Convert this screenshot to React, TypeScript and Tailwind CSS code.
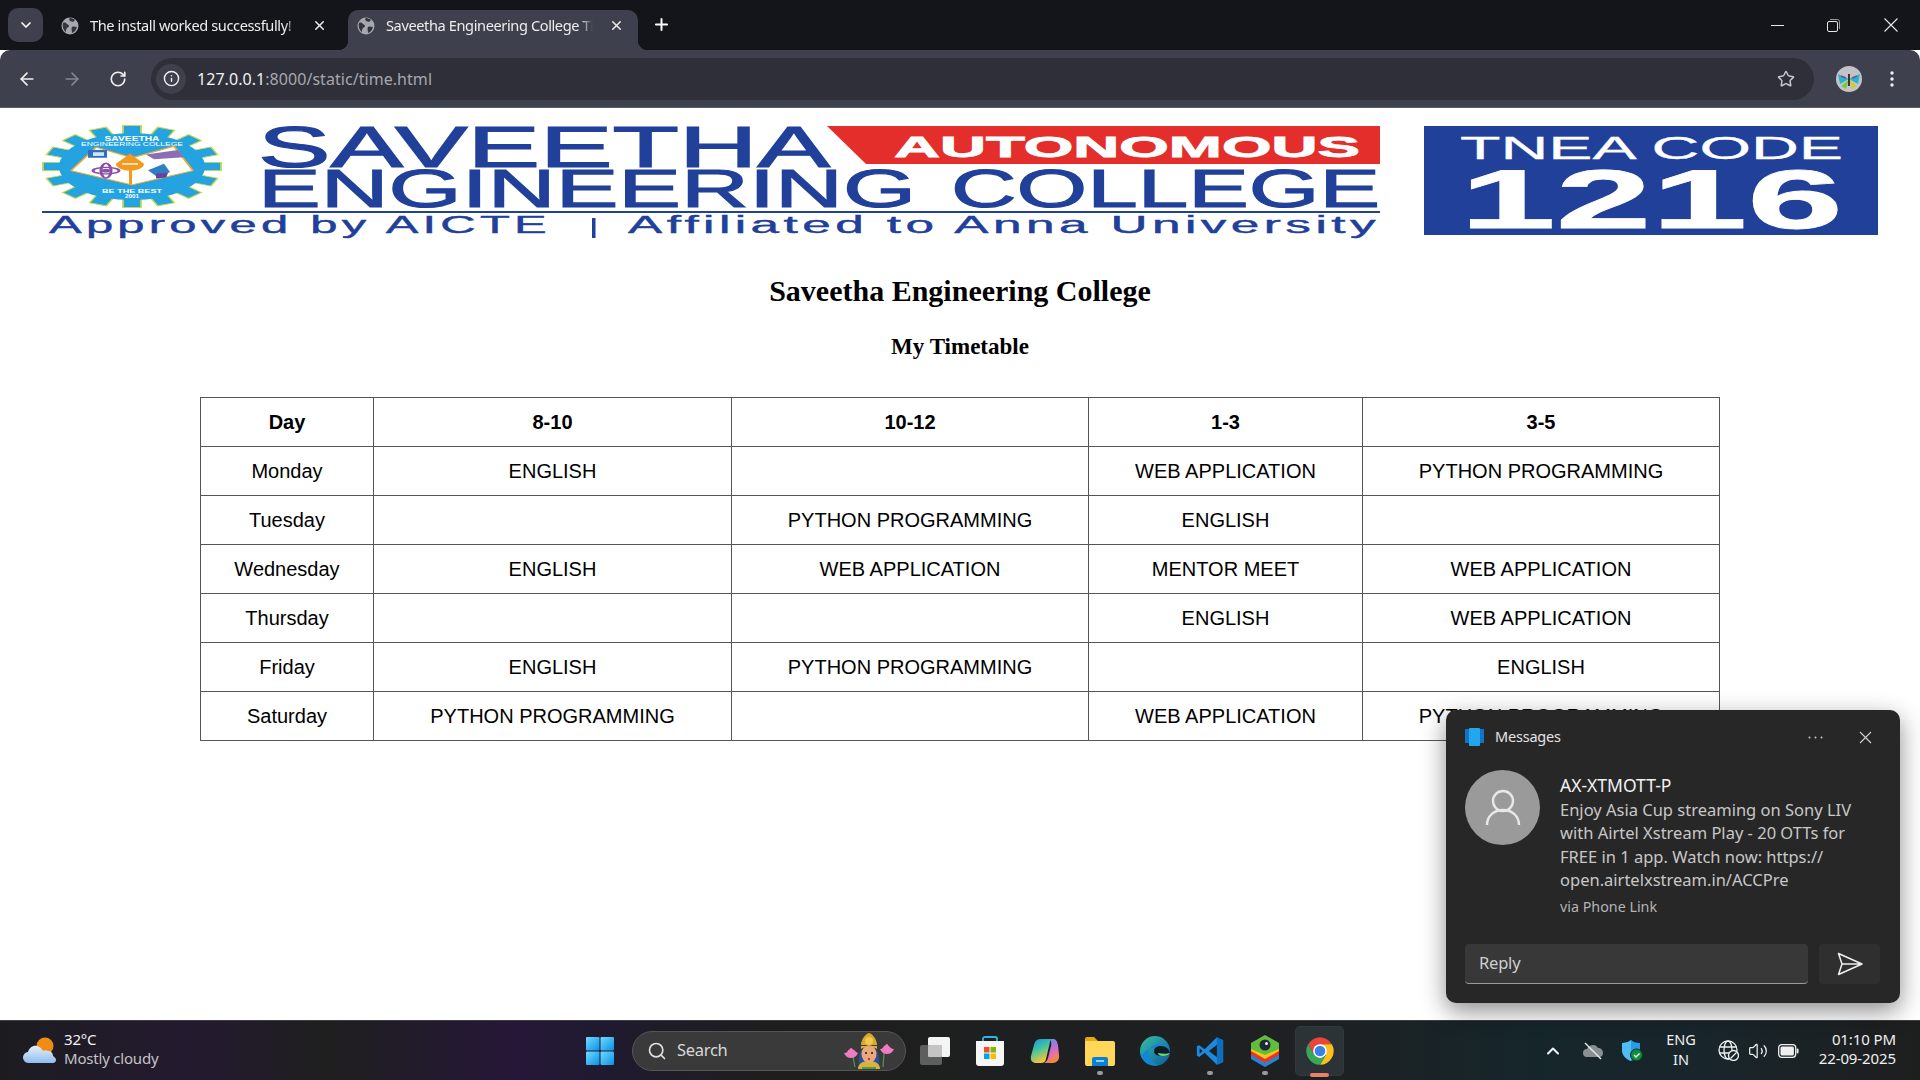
import React from "react";
import { ArrowLeft, ArrowRight, RotateCw, Info, Star, ChevronDown, X, Plus, Search, Volume2, ChevronUp } from "lucide-react";

const rows = [
  ["Monday", "ENGLISH", "", "WEB APPLICATION", "PYTHON PROGRAMMING"],
  ["Tuesday", "", "PYTHON PROGRAMMING", "ENGLISH", ""],
  ["Wednesday", "ENGLISH", "WEB APPLICATION", "MENTOR MEET", "WEB APPLICATION"],
  ["Thursday", "", "", "ENGLISH", "WEB APPLICATION"],
  ["Friday", "ENGLISH", "PYTHON PROGRAMMING", "", "ENGLISH"],
  ["Saturday", "PYTHON PROGRAMMING", "", "WEB APPLICATION", "PYTHON PROGRAMMING"],
];

function Favicon() {
  return (
    <svg width="18" height="18" viewBox="0 0 18 18" className="shrink-0">
      <circle cx="9" cy="9" r="8.500" fill="#a6a8ae" />
      <path d="M2 6c2-1 3 0 4 1s2 1 2 2-1 1-2 2-1 2-1 4C3 14 1 10 2 6zM9 1c2 0 4 1 5 2l-2 2-3-1-1-2zM11 10c2-1 3 0 5 0-1 3-2 5-5 6 0-2-1-4 0-6z" fill="#33353f" />
    </svg>
  );
}

function Banner() {
  const teeth = Array.from({ length: 16 }, (_, i) => (i * 360) / 16);
  const blue = "#21409a";
  return (
    <svg width="1342" height="115" viewBox="0 0 1342 115" className="shrink-0">
      <g transform="translate(92 42.500) scale(1 0.46)">
        {teeth.map((a) => (
          <rect key={a} x="-9" y="-89" width="18" height="22" fill="#25a3e0" stroke="#c5d94a" strokeWidth="1.800" transform={`rotate(${a})`} />
        ))}
        <circle r="73" fill="#25a3e0" />
        <path d="M-61 9 L-36 -42 L0 -19 L42 -44 L61 9 L0 40 Z" fill="#ffffff" stroke="#f0a92b" strokeWidth="2" strokeLinejoin="round" />
        <rect x="-44" y="-36" width="19" height="17" fill="#2f6fc0" />
        <rect x="-39" y="-31" width="11" height="8" fill="#cfe6f7" />
        <ellipse cx="-26" cy="9" rx="13" ry="7" fill="none" stroke="#8a4fa8" strokeWidth="3" />
        <ellipse cx="-26" cy="9" rx="5" ry="16" fill="none" stroke="#8a4fa8" strokeWidth="3" />
        <circle cx="-26" cy="9" r="4" fill="#8a4fa8" />
        <path d="M14 -26 L46 -36 L52 -20 L22 -16 Z" fill="#8b6fb5" />
        <path d="M16 8 L32 -6 L38 12 L26 24 Z" fill="#2f7fc0" />
        <path d="M24 16 L36 14 L34 24 L24 26 Z" fill="#6a3d9e" />
        <path d="M-2 -28 L12 -6 A13 14 0 1 1 -16 -6 Z" fill="#f39a1e" />
        <rect x="-10" y="-7" width="16" height="3" fill="#fff" />
        <rect x="-3" y="8" width="3" height="31" fill="#f39a1e" />
        <text x="0" y="-56" textAnchor="middle" fontFamily="Liberation Sans" fontWeight="700" fontSize="15" fill="#fff" textLength="55" lengthAdjust="spacingAndGlyphs">SAVEETHA</text>
        <text x="0" y="-45" textAnchor="middle" fontFamily="Liberation Sans" fontSize="10" fill="#fff" textLength="102" lengthAdjust="spacingAndGlyphs">ENGINEERING COLLEGE</text>
        <text x="0" y="57" textAnchor="middle" fontFamily="Liberation Sans" fontWeight="700" fontSize="11" fill="#fff" textLength="60" lengthAdjust="spacingAndGlyphs">BE THE BEST</text>
        <text x="0" y="69" textAnchor="middle" fontFamily="Liberation Sans" fontWeight="700" fontSize="10" fill="#fff" textLength="14" lengthAdjust="spacingAndGlyphs">2001</text>
      </g>
      <text x="218" y="43" fontFamily="Liberation Sans" fontSize="57" fill={blue} stroke={blue} strokeWidth="1.200" textLength="572" lengthAdjust="spacingAndGlyphs">SAVEETHA</text>
      <path d="M787 2 H1340 V40 H826 Z" fill="#e42e2c" />
      <text x="854" y="33" fontFamily="Liberation Sans" fontWeight="700" fontSize="29" fill="#fff" stroke="#fff" strokeWidth="0.800" textLength="466" lengthAdjust="spacingAndGlyphs">AUTONOMOUS</text>
      <text x="218" y="83" fontFamily="Liberation Sans" fontSize="54" fill={blue} stroke={blue} strokeWidth="1.100" textLength="658" lengthAdjust="spacingAndGlyphs">ENGINEERING</text>
      <text x="911" y="83" fontFamily="Liberation Sans" fontSize="54" fill={blue} stroke={blue} strokeWidth="1.100" textLength="429" lengthAdjust="spacingAndGlyphs">COLLEGE</text>
      <rect x="2" y="87" width="1338" height="2" fill={blue} />
      <text x="9" y="109" fontFamily="Liberation Sans" fontSize="23" letterSpacing="2" fill={blue} stroke={blue} strokeWidth="0.400" textLength="502" lengthAdjust="spacingAndGlyphs">Approved by AICTE</text>
      <rect x="552" y="94" width="3.500" height="20" fill={blue} />
      <text x="588" y="109" fontFamily="Liberation Sans" fontSize="23" letterSpacing="2" fill={blue} stroke={blue} strokeWidth="0.400" textLength="752" lengthAdjust="spacingAndGlyphs">Affiliated to Anna University</text>
    </svg>
  );
}

function Tnea() {
  return (
    <svg width="454" height="109" viewBox="0 0 454 109" className="shrink-0">
      <rect width="454" height="109" fill="#21409a" />
      <text x="36" y="33" fontFamily="Liberation Sans" fontSize="32" fill="#fff" stroke="#fff" strokeWidth="0.300" textLength="383" lengthAdjust="spacingAndGlyphs">TNEA CODE</text>
      <text x="36" y="102" fontFamily="Liberation Sans" fontSize="84" fontWeight="700" fill="#fff" stroke="#fff" strokeWidth="0.800" textLength="383" lengthAdjust="spacingAndGlyphs">1216</text>
    </svg>
  );
}

function Butterfly() {
  return (
    <svg width="26" height="26" viewBox="0 0 26 26">
      <circle cx="13" cy="13" r="13" fill="#c4c4c8" />
      <path d="M13 13 L2 8 L4 18 Z" fill="#22b8c8" />
      <path d="M13 13 L24 8 L22 18 Z" fill="#22b8c8" />
      <path d="M13 14 L5 20 L10 23 Z" fill="#7ac943" />
      <path d="M13 14 L21 20 L16 23 Z" fill="#d8c83a" />
      <path d="M12 8h2v12h-2z" fill="#4a3226" />
      <path d="M5 10l5 2M21 10l-5 2" stroke="#8e3fa8" strokeWidth="1.500" />
    </svg>
  );
}

function WinLogo() {
  return (
    <svg width="28" height="28" viewBox="0 0 28 28" className="shrink-0">
      <defs>
        <linearGradient id="wl" x1="0" y1="0" x2="1" y2="1">
          <stop offset="0" stopColor="#6fdcff" />
          <stop offset="1" stopColor="#0a8fe6" />
        </linearGradient>
      </defs>
      <rect x="0" y="0" width="13.500" height="13.500" rx="1" fill="url(#wl)" />
      <rect x="14.500" y="0" width="13.500" height="13.500" rx="1" fill="url(#wl)" />
      <rect x="0" y="14.500" width="13.500" height="13.500" rx="1" fill="url(#wl)" />
      <rect x="14.500" y="14.500" width="13.500" height="13.500" rx="1" fill="url(#wl)" />
    </svg>
  );
}

function TaskView() {
  return (
    <svg width="30" height="28" viewBox="0 0 30 28">
      <rect x="8" y="0" width="22" height="20" rx="2" fill="#f4f4f4" />
      <rect x="0" y="8" width="22" height="20" rx="2" fill="#5e5e5e" />
      <rect x="8" y="8" width="14" height="12" rx="1" fill="#c4c4c4" />
    </svg>
  );
}

function Store() {
  return (
    <svg width="30" height="30" viewBox="0 0 30 30">
      <path d="M8 7V2.500C8 1.500 9 1 10 1h10c1 0 2 .5 2 1.500V7" fill="none" stroke="#29b6e8" strokeWidth="1.800" />
      <path d="M1 5h28v22a3 3 0 0 1-3 3H4a3 3 0 0 1-3-3z" fill="#f6f6f6" />
      <rect x="9" y="11" width="5.500" height="5.500" fill="#f25022" />
      <rect x="15.500" y="11" width="5.500" height="5.500" fill="#7fba00" />
      <rect x="9" y="17.500" width="5.500" height="5.500" fill="#00a4ef" />
      <rect x="15.500" y="17.500" width="5.500" height="5.500" fill="#ffb900" />
    </svg>
  );
}

function Copilot() {
  return (
    <svg width="30" height="26" viewBox="0 0 30 26">
      <defs>
        <linearGradient id="cpa" x1="0" y1="0" x2="0.400" y2="1">
          <stop offset="0" stopColor="#2088e8" />
          <stop offset="0.500" stopColor="#3fc7a0" />
          <stop offset="1" stopColor="#f5c33b" />
        </linearGradient>
        <linearGradient id="cpb" x1="0" y1="0" x2="0.400" y2="1">
          <stop offset="0" stopColor="#30b0e8" />
          <stop offset="0.450" stopColor="#b070e0" />
          <stop offset="0.800" stopColor="#f0709a" />
          <stop offset="1" stopColor="#f08a3c" />
        </linearGradient>
      </defs>
      <path d="M11 1h8c1 0 1.500 1 1 3L16 21c-.6 2.400-2 4-5 4H6c-3 0-6-2-5-7L4 7c1-4 3-6 7-6z" fill="url(#cpa)" />
      <path d="M18 1h5c3 0 4 2 5 6l1 10c1 5-3 8-6 8h-9c2-1 3-2 4-5l3-12c.7-3 .5-6-3-7z" fill="url(#cpb)" />
    </svg>
  );
}

function Folder() {
  return (
    <svg width="30" height="30" viewBox="0 0 30 30">
      <path d="M0 3a2 2 0 0 1 2-2h7l4 4h-13z" fill="#e8a80c" />
      <path d="M0 5h28a2 2 0 0 1 2 2v21a2 2 0 0 1-2 2H2a2 2 0 0 1-2-2z" fill="#ffd75a" />
      <path d="M7 30v-7a2 2 0 0 1 2-2h12a2 2 0 0 1 2 2v7z" fill="#0f7fd0" />
      <rect x="11" y="24" width="8" height="2" fill="#8fd0f5" />
    </svg>
  );
}

function Edge() {
  return (
    <svg width="30" height="30" viewBox="0 0 30 30">
      <defs>
        <linearGradient id="eda" x1="0" y1="0" x2="1" y2="1">
          <stop offset="0" stopColor="#35c1a0" />
          <stop offset="1" stopColor="#0c59a4" />
        </linearGradient>
      </defs>
      <circle cx="15" cy="15" r="15" fill="url(#eda)" />
      <path d="M30 17c0-5-5-9-11-9-7 0-12 6-10 13 1 4 5 7 10 8-8 2-17-3-19-12 3 5 3-4 14-5 9-1 16 1 16 5z" fill="#1186d8" />
      <path d="M14 15c0-3 3-5 7-5 5 0 8 3 9 7-1 2-4 3-7 3-5 0-9-1-9-5z" fill="#141c22" />
      <path d="M30 17c-1 2-4 3-7 3-3 0-5-1-5-3 4 1 9 1 12 0z" fill="#5fe07a" />
    </svg>
  );
}

function VSCode() {
  return (
    <svg width="30" height="30" viewBox="0 0 24 24">
      <path fillRule="evenodd" d="M17.500 1 7.700 10.600 3.300 7.300 1.500 8.200v7.600l1.800.9 4.400-3.300L17.500 23 22.500 20.700V3.300zM17.600 7 11.200 12l6.400 5zM3.700 9.800 6 12l-2.300 2.200z" fill="#1a8ae0" />
      <path d="M17.500 1 22.500 3.300V20.700L17.500 23z" fill="#0f6fbf" />
    </svg>
  );
}

function BlueStacks() {
  return (
    <svg width="30" height="32" viewBox="0 0 30 32">
      <path d="M15 14 29 20v4L15 32 1 24v-4z" fill="#1e88d8" />
      <path d="M15 10 29 16v4L15 28 1 20v-4z" fill="#e8352b" />
      <path d="M15 6 29 12v4L15 24 1 16v-4z" fill="#f5c518" />
      <path d="M15 0 29 8v6L15 20 1 14V8z" fill="#62bd3c" />
      <circle cx="15" cy="10" r="5.500" fill="#1f2a33" />
      <circle cx="16.500" cy="8.500" r="1.500" fill="#eef" />
    </svg>
  );
}

function Chrome() {
  return (
    <svg width="30" height="30" viewBox="0 0 48 48">
      <path d="M5 13 A22 22 0 0 1 43 13 L24 13 L14.500 30 Z" fill="#e8453c" />
      <path d="M43 13 A22 22 0 0 1 24 46 L33.500 30 L24 13 Z" fill="#f9c01e" />
      <path d="M24 46 A22 22 0 0 1 5 13 L14.500 30 L33.500 30 Z" fill="#3aa757" />
      <circle cx="24" cy="24" r="11" fill="#fff" />
      <circle cx="24" cy="24" r="8.500" fill="#3a80ec" />
    </svg>
  );
}

function Deity() {
  return (
    <svg width="51" height="36" viewBox="0 0 51 36">
      <path d="M10 24 12 34M41 20 40 34" stroke="#4f9a45" strokeWidth="1.200" />
      <path d="M1 20c3 0 4-2 4-3 2 0 2-2 3-2 1 0 2 2 3 2 1 0 1 2 4 3-1 3-4 5-7 5s-6-2-7-5z" fill="#ef7cc0" />
      <path d="M37 16c3 0 3-2 4-3 1 0 2-2 3-2 1 0 1 2 2 2 1 1 2 3 5 3-1 3-4 5-7 5s-6-2-7-5z" fill="#ef7cc0" />
      <path d="M18 12c0-5 4-11 8-12 4 1 8 7 8 12z" fill="#d9a92e" />
      <circle cx="26" cy="8" r="4" fill="#f0c84a" />
      <path d="M16 34c-1-10 0-20 10-20s11 10 10 20z" fill="#2b4f9a" />
      <path d="M15 36c0-5 4-8 11-8s11 3 11 8z" fill="#d8b53a" />
      <ellipse cx="26" cy="21" rx="7.500" ry="9" fill="#e9a97c" />
      <path d="M18 16c4-3 12-3 16 0v-3H18z" fill="#e0b43a" />
      <circle cx="23" cy="20" r="1.100" fill="#222" />
      <circle cx="29" cy="20" r="1.100" fill="#222" />
      <circle cx="26" cy="26" r="1.200" fill="#c23b3b" />
      <path d="M19 34h14v2H19z" fill="#4f9a45" />
    </svg>
  );
}

function Weather() {
  return (
    <svg width="34" height="28" viewBox="0 0 34 28" className="shrink-0">
      <defs>
        <linearGradient id="wc" x1="0" y1="0" x2="0" y2="1">
          <stop offset="0" stopColor="#e6f0fb" />
          <stop offset="1" stopColor="#8fbdec" />
        </linearGradient>
      </defs>
      <circle cx="22" cy="9" r="8.500" fill="#f08c14" />
      <path d="M6 26a5.500 5.500 0 0 1-1-11c1-4 5-7 9-6 3 .5 5 3 6 5 1-1 3-1 5 0 3 0 5 2 5 5 2 1 3 3 3 4s-1 3-3 3z" fill="url(#wc)" />
    </svg>
  );
}

function OneDrive() {
  return (
    <svg width="22" height="18" viewBox="0 0 22 18">
      <path d="M5 15a4 4 0 0 1 0-8c1-3 4-4 6-4s4 1 5 3c3 0 5 2 5 5s-2 4-4 4z" fill="#8a9092" />
      <path d="M3 1 19 17" stroke="#e8e8e8" strokeWidth="1.400" />
    </svg>
  );
}

function Shield() {
  return (
    <svg width="22" height="22" viewBox="0 0 22 22">
      <path d="M9 0c2 2 5 3 9 3v7c0 5-4 9-9 11-5-2-9-6-9-11V3c4 0 7-1 9-3z" fill="#2a9be8" />
      <path d="M9 0v21C4 19 0 15 0 10V3c4 0 7-1 9-3z" fill="#50bdf5" />
      <circle cx="14.500" cy="15" r="6" fill="#0f8f3a" stroke="#15262b" />
      <path d="M12 15l2 2 3.500-3.500" fill="none" stroke="#fff" strokeWidth="1.400" />
    </svg>
  );
}

function GlobeOff() {
  return (
    <svg width="21" height="21" viewBox="0 0 21 21" fill="none" stroke="#f0f0f0" strokeWidth="1.300">
      <circle cx="10" cy="10" r="9" />
      <ellipse cx="10" cy="10" rx="4" ry="9" />
      <path d="M1.500 7h17M1.500 13h17" />
      <circle cx="15.500" cy="15.500" r="5" fill="#15262b" />
      <path d="M12.500 18.500l6-6" />
    </svg>
  );
}

function Battery() {
  return (
    <svg width="21" height="14" viewBox="0 0 21 14">
      <rect x="0.700" y="0.700" width="17" height="12.600" rx="3" fill="none" stroke="#f0f0f0" strokeWidth="1.300" />
      <rect x="2.500" y="2.500" width="13.400" height="9" rx="1.500" fill="#f0f0f0" />
      <rect x="18.700" y="4.500" width="1.800" height="5" rx="0.900" fill="#f0f0f0" />
    </svg>
  );
}

function Slot({ children, dot, active }: { children: React.ReactNode; dot?: boolean; active?: boolean }) {
  return (
    <div className="relative flex h-[50px] w-[55px] shrink-0 items-center justify-center">
      {active && <div className="absolute inset-y-0 left-[3px] right-[3px] rounded-[5px] border border-[#2f3a3e] bg-[#2b3336]" />}
      <div className="relative flex">{children}</div>
      {dot && <div className="absolute bottom-[1px] h-[4px] w-[6px] rounded-full bg-[#9a9a9a]" />}
      {active && <div className="absolute bottom-[-1px] h-[4px] w-[19px] rounded-full bg-[#e9806a]" />}
    </div>
  );
}

function Tab({ title, active, w, pl, ml }: { title: string; active?: boolean; w: string; pl: string; ml: string }) {
  return (
    <div className={`relative flex h-[40px] items-center pb-[9px] ${pl} ${w} ${active ? "rounded-t-[10px] bg-[#3e404d]" : ""}`}>
      {active && <div className="absolute bottom-0 left-[-10px] h-[10px] w-[10px] bg-[radial-gradient(circle_at_0_0,transparent_10px,#3e404d_10.500px)]" />}
      {active && <div className="absolute bottom-0 right-[-10px] h-[10px] w-[10px] bg-[radial-gradient(circle_at_100%_0,transparent_10px,#3e404d_10.500px)]" />}
      <Favicon />
      <span className="ml-[11px] w-[207px] overflow-hidden whitespace-nowrap text-[14.600px] tracking-[-0.4px] text-[#eceded] [mask-image:linear-gradient(90deg,#000_195px,transparent_207px)]">
        {title}
      </span>
      <X size={15} strokeWidth={2.500} className={`${ml} text-[#e8e8e8]`} />
    </div>
  );
}

function Toast() {
  return (
    <div className="absolute left-[1446px] top-[710px] flex h-[293px] w-[454px] flex-col rounded-[10px] bg-[#272727] pl-[19px] pr-[20px] shadow-[0_8px_24px_rgba(0,0,0,0.45)]">
      <div className="flex h-[54px] shrink-0 items-center">
        <svg width="19" height="18" viewBox="0 0 19 18">
          <rect x="0" y="1" width="19" height="14" fill="#1473c4" />
          <rect x="4" y="0" width="11" height="18" rx="1" fill="#22a7ee" />
        </svg>
        <span className="ml-[11px] text-[14.500px] tracking-[-0.2px] text-[#e4e4e4]">Messages</span>
        <svg width="15" height="3" viewBox="0 0 15 3" className="ml-auto">
          <circle cx="1.500" cy="1.500" r="1" fill="#c8c8c8" />
          <circle cx="7.500" cy="1.500" r="1" fill="#c8c8c8" />
          <circle cx="13.500" cy="1.500" r="1" fill="#c8c8c8" />
        </svg>
        <svg width="13" height="13" viewBox="0 0 13 13" className="ml-[36px] mr-[8px]">
          <path d="M1 1l11 11M12 1 1 12" stroke="#d0d0d0" strokeWidth="1.100" />
        </svg>
      </div>
      <div className="flex h-[180px] shrink-0">
        <div className="mt-[6px] flex h-[75px] w-[75px] shrink-0 items-center justify-center rounded-full bg-[#9a9a9a]">
          <svg width="36" height="38" viewBox="0 0 36 38">
            <circle cx="18" cy="12" r="10" fill="none" stroke="#e8e8e8" strokeWidth="2.400" />
            <path d="M2 36c0-9 7-15 16-15s16 6 16 15" fill="none" stroke="#e8e8e8" strokeWidth="2.400" />
          </svg>
        </div>
        <div className="ml-[20px] flex flex-col">
          <div className="mt-[10px] text-[17.500px] leading-[22px] text-[#f2f2f2]">AX-XTMOTT-P</div>
          <div className="mt-[2px] whitespace-nowrap text-[16.500px] leading-[23.300px] text-[#c8c8c8]">
            <div>Enjoy Asia Cup streaming on Sony LIV</div>
            <div>with Airtel Xstream Play - 20 OTTs for</div>
            <div>FREE in 1 app. Watch now: https://</div>
            <div>open.airtelxstream.in/ACCPre</div>
          </div>
          <div className="mt-[6px] text-[14.300px] leading-[20px] text-[#b4b4b4]">via Phone Link</div>
        </div>
      </div>
      <div className="flex h-[40px] shrink-0 gap-[11px]">
        <div className="flex w-[343px] items-center rounded-[4px] border-b border-[#9a9a9a] bg-[#383838] pl-[14px] text-[16.500px] tracking-[-0.2px] text-[#cfcfcf]">Reply</div>
        <div className="flex w-[61px] items-center justify-center rounded-[4px] bg-[#2f2f2f]">
          <svg width="26" height="24" viewBox="0 0 26 24">
            <path d="M1.500 1.500 25 12 1.500 22.500 5 12zM5 12h20" fill="none" stroke="#f0f0f0" strokeWidth="1.500" strokeLinejoin="round" />
          </svg>
        </div>
      </div>
    </div>
  );
}

export default function App() {
  return (
    <div className="relative flex h-screen w-full flex-col overflow-hidden bg-white font-['Noto_Sans',sans-serif]">
      {/* tab strip */}
      <div className="flex h-[50px] shrink-0 items-end bg-[#14151a] pl-[8px]">
        <div className="mb-[8px] flex h-[34px] w-[35px] items-center justify-center rounded-[10px] bg-[#3e404d] text-white">
          <ChevronDown size={16} strokeWidth={2.500} />
        </div>
        <Tab title="The install worked successfully!" w="w-[295px]" pl="pl-[18px]" ml="ml-[15px]" />
        <div className="w-[10px]" />
        <Tab title="Saveetha Engineering College Timetable" active w="w-[290px]" pl="pl-[9px]" ml="ml-[16px]" />
        <Plus size={19} strokeWidth={2.500} className="mb-[16px] ml-[14px] text-white" />
        <div className="mb-[18px] ml-auto flex items-center text-[#e8e8e8]">
          <div className="h-px w-[13px] bg-[#e8e8e8]" />
          <svg width="13" height="13" viewBox="0 0 13 13" className="ml-[43px]">
            <rect x="0.500" y="2.500" width="10" height="10" rx="1.500" fill="none" stroke="#e8e8e8" />
            <path d="M3 .5h7.500a2 2 0 0 1 2 2V10" fill="none" stroke="#9a9a9a" />
          </svg>
          <svg width="14" height="14" viewBox="0 0 14 14" className="ml-[44px] mr-[22px]">
            <path d="M.5.5l13 13M13.500.5l-13 13" stroke="#e8e8e8" strokeWidth="1.100" />
          </svg>
        </div>
      </div>
      {/* toolbar */}
      <div className="flex h-[58px] shrink-0 items-center rounded-t-[10px] border-b border-[#5c5d66] bg-[#3e404d] pl-[17px] pr-[26px]">
        <ArrowLeft size={20} strokeWidth={2} className="text-[#f0f0f0]" />
        <ArrowRight size={20} strokeWidth={2} className="ml-[25px] text-[#85868e]" />
        <RotateCw size={18} strokeWidth={2.200} className="ml-[27px] text-[#f0f0f0]" />
        <div className="ml-[24px] flex h-[42px] flex-1 items-center rounded-full bg-[#2e2f39] pl-[5px] pr-[19px]">
          <div className="flex h-[30px] w-[30px] items-center justify-center rounded-full bg-[#3e404d]">
            <Info size={17} strokeWidth={2} className="text-[#f0f0f0]" />
          </div>
          <span className="ml-[11px] mt-[1px] text-[16px] tracking-[0.05px] text-[#f2f2f2]">
            127.0.0.1<span className="text-[#a6a7ad]">:8000/static/time.html</span>
          </span>
          <Star size={18} strokeWidth={2} className="ml-auto text-[#c8c8cc]" />
        </div>
        <div className="ml-[22px] flex">
          <Butterfly />
        </div>
        <svg width="4" height="16" viewBox="0 0 4 16" className="ml-[28px]">
          <circle cx="2" cy="2" r="1.700" fill="#f0f0f0" />
          <circle cx="2" cy="8" r="1.700" fill="#f0f0f0" />
          <circle cx="2" cy="14" r="1.700" fill="#f0f0f0" />
        </svg>
      </div>
      {/* page */}
      <main className="flex-1 font-['Liberation_Serif',serif] text-black">
        <div className="flex pl-[40px] pt-[16px]">
          <Banner />
          <div className="ml-[42px] mt-[2px]">
            <Tnea />
          </div>
        </div>
        <h1 className="mt-[34px] text-center text-[30px] font-bold leading-[35px]">Saveetha Engineering College</h1>
        <h2 className="mt-[25px] text-center text-[23px] font-bold leading-[27px]">My Timetable</h2>
        <table className="ml-[200px] mt-[37px] w-[1519px] table-fixed border-collapse font-['Liberation_Sans',Arial,sans-serif] text-[20px]">
          <colgroup>
            <col className="w-[173px]" />
            <col className="w-[358px]" />
            <col className="w-[357px]" />
            <col className="w-[274px]" />
            <col className="w-[357px]" />
          </colgroup>
          <thead>
            <tr className="h-[49px]">
              {["Day", "8-10", "10-12", "1-3", "3-5"].map((h) => (
                <th key={h} className="border border-[#555555] p-0 text-center font-bold">{h}</th>
              ))}
            </tr>
          </thead>
          <tbody>
            {rows.map((r) => (
              <tr key={r[0]} className="h-[49px]">
                {r.map((c, i) => (
                  <td key={i} className="border border-[#555555] p-0 text-center">{c}</td>
                ))}
              </tr>
            ))}
          </tbody>
        </table>
      </main>
      {/* taskbar */}
      <div className="flex h-[60px] shrink-0 items-center border-t border-[#3d3d42] bg-[linear-gradient(90deg,#1c1c20_0%,#241a30_10%,#1f1f1f_17%,#261738_27%,#1f1a30_31%,#1e1e1e_40%,#1e2022_68%,#15262b_80%,#19252a_90%,#1e1e1e_100%)]">
        <div className="flex w-[586px] shrink-0 items-center pl-[23px]">
          <Weather />
          <div className="mb-[3px] ml-[7px] flex flex-col text-[15px] leading-[19.500px] tracking-[-0.2px]">
            <span className="text-[#f4f4f4]">32°C</span>
            <span className="text-[#c4c4c4]">Mostly cloudy</span>
          </div>
        </div>
        <WinLogo />
        <div className="ml-[18px] flex h-[40px] w-[274px] shrink-0 items-center overflow-hidden rounded-full border border-[#555] bg-[#3a3a3a] pl-[14px]">
          <Search size={20} strokeWidth={2} className="text-[#e0e0e0]" />
          <span className="ml-[10px] text-[16.500px] tracking-[-0.3px] text-[#d8d8d8]">Search</span>
          <div className="ml-auto mr-[11px] flex">
            <Deity />
          </div>
        </div>
        <div className="ml-[1px] flex">
          <Slot><TaskView /></Slot>
          <Slot><Store /></Slot>
          <Slot><Copilot /></Slot>
          <Slot dot><Folder /></Slot>
          <Slot><Edge /></Slot>
          <Slot dot><VSCode /></Slot>
          <Slot dot><BlueStacks /></Slot>
          <Slot active><Chrome /></Slot>
        </div>
        <div className="ml-auto flex items-center text-[#f0f0f0]">
          <div className="flex w-[40px] justify-center"><ChevronUp size={20} strokeWidth={2.500} /></div>
          <div className="flex w-[40px] justify-center"><OneDrive /></div>
          <div className="flex w-[40px] justify-center"><Shield /></div>
          <div className="mb-[2px] flex w-[56px] flex-col items-center text-[14.500px] leading-[19.500px]">
            <span>ENG</span>
            <span>IN</span>
          </div>
          <div className="ml-[4px] flex w-[30px] justify-center"><GlobeOff /></div>
          <div className="flex w-[30px] justify-center"><Volume2 size={20} strokeWidth={1.500} /></div>
          <div className="flex w-[30px] justify-center"><Battery /></div>
          <div className="mb-[3px] flex w-[117px] flex-col items-end pr-[24px] text-[15px] leading-[19.500px] tracking-[-0.1px]">
            <span>01:10 PM</span>
            <span>22-09-2025</span>
          </div>
        </div>
      </div>
      <Toast />
    </div>
  );
}
